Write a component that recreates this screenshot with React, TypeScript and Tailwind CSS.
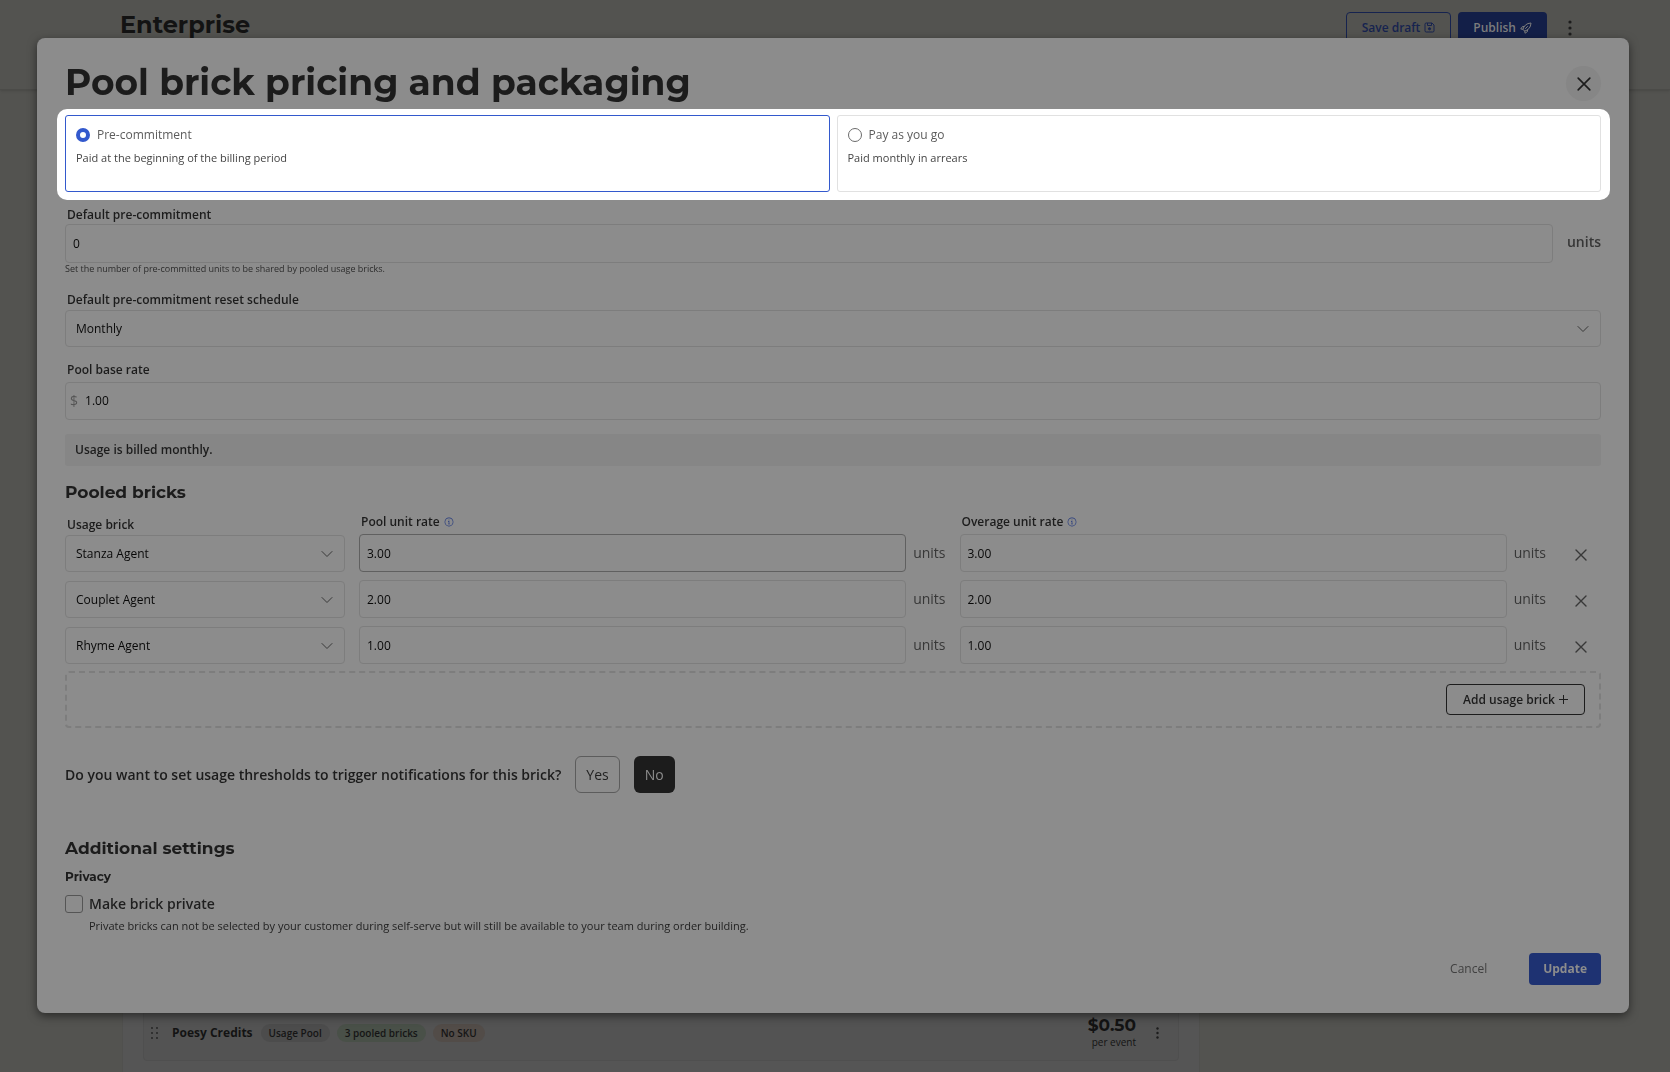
import React, { useState } from "react";
import { RxInfoCircled } from "react-icons/rx";

interface Brick {
  name: string;
  poolRate: string;
  overageRate: string;
}

const bricks: Brick[] = [
  { name: "Stanza Agent", poolRate: "3.00", overageRate: "3.00" },
  { name: "Couplet Agent", poolRate: "2.00", overageRate: "2.00" },
  { name: "Rhyme Agent", poolRate: "1.00", overageRate: "1.00" },
];

const headingFont = "font-[Montserrat,Inter,sans-serif]";
const labelClass = "block pl-0.5 text-xs leading-[18px] font-semibold text-[#1c1c1c]";
const inputClass =
  "w-full rounded-[4px] border border-[#7d7d7d] bg-transparent px-[7px] text-xs text-[#080808] outline-none";

const SaveIcon = () => (
  <svg className="size-[11px]" viewBox="0 0 22 22" fill="none" stroke="currentColor" strokeWidth="2">
    <path d="M2 4.5A2.5 2.5 0 0 1 4.500 2H16l4 4v11.500A2.500 2.500 0 0 1 17.500 20h-13A2.500 2.500 0 0 1 2 17.500z" />
    <path d="M7 2v5h8V2" />
    <circle cx="11" cy="13.500" r="2.200" fill="currentColor" />
  </svg>
);

const RocketIcon = () => (
  <svg
    className="size-3"
    viewBox="0 0 24 24"
    fill="none"
    stroke="currentColor"
    strokeWidth="2"
    strokeLinejoin="round"
    strokeLinecap="round"
  >
    <path d="M6 14C8 7 13 2.500 22 2c-.5 9-5 14-12 16z" />
    <path d="M8.500 9H5l-3.500 5 4.500.500M15 15.500V19l-5 3.500-.5-4.500M11 13l4-4" />
  </svg>
);

const CrossIcon = ({ className }: { className: string }) => (
  <svg
    className={className}
    viewBox="0 0 12 12"
    fill="none"
    stroke="currentColor"
    strokeWidth="1.400"
    strokeLinecap="round"
  >
    <path d="M1 1l10 10M11 1L1 11" />
  </svg>
);

const PlusIcon = () => (
  <svg className="size-[9px]" viewBox="0 0 9 9" fill="none" stroke="currentColor">
    <path d="M4.500 0v9M0 4.500h9" />
  </svg>
);

const DotsIcon = ({ className }: { className: string }) => (
  <svg className={className} viewBox="0 0 4 16" fill="currentColor">
    <circle cx="2" cy="2" r="1.600" />
    <circle cx="2" cy="8" r="1.600" />
    <circle cx="2" cy="14" r="1.600" />
  </svg>
);

const HandleIcon = () => (
  <svg className="h-3 w-[7px] text-[#222222]" viewBox="0 0 7 12" fill="currentColor">
    {[1, 6].map((x) => [1, 6, 11].map((y) => <circle key={`${x}-${y}`} cx={x} cy={y} r="0.900" />))}
  </svg>
);

interface SelectProps {
  id: string;
  options: string[];
  value: string;
  label?: string;
}

const Select: React.FC<SelectProps> = ({ id, options, value, label }) => (
  <div className="relative">
    <select
      id={id}
      aria-label={label}
      defaultValue={value}
      className="block h-[37px] w-full appearance-none rounded-[4px] border border-[#7d7d7d] bg-transparent px-2.5 text-xs text-[#080808] outline-none"
    >
      {options.map((option) => (
        <option key={option}>{option}</option>
      ))}
    </select>
    <svg
      className="pointer-events-none absolute top-[15px] right-3 h-2 w-3 text-[#383838]"
      viewBox="0 0 12 8"
      fill="none"
      stroke="currentColor"
      strokeLinecap="round"
      strokeLinejoin="round"
    >
      <path d="M1 1.500l5 5 5-5" />
    </svg>
  </div>
);

interface PlanCardProps {
  title: string;
  description: string;
  checked: boolean;
  onSelect: () => void;
}

const PlanCard: React.FC<PlanCardProps> = ({ title, description, checked, onSelect }) => (
  <label
    className={`block h-[77px] flex-1 rounded-[3px] border px-2.5 pt-[9px] ${
      checked ? "border-[#3359cd]" : "border-[#e1e1e1]"
    }`}
  >
    <span className="flex items-center gap-[7px] text-xs leading-5 text-[#5c5c5c]">
      <input
        type="radio"
        name="plan"
        checked={checked}
        onChange={onSelect}
        className="size-3.5 appearance-none rounded-full border border-[#6b6b6b] bg-white checked:border-4 checked:border-[#3359cd]"
      />
      {title}
    </span>
    <span className="mt-1 block text-[11px] leading-[18px] text-[#444444]">{description}</span>
  </label>
);

const BrickRow = ({ brick, first }: { brick: Brick; first: boolean }) => {
  const id = brick.name.split(" ")[0].toLowerCase();
  return (
    <div className="grid grid-cols-[280px_minmax(0,1fr)_minmax(0,1fr)_41px] items-end gap-x-3.5">
      <div>
        {first && (
          <label htmlFor={`${id}-brick`} className={`${labelClass} mb-px`}>
            Usage brick
          </label>
        )}
        <Select
          id={`${id}-brick`}
          label={first ? undefined : "Usage brick"}
          value={brick.name}
          options={bricks.map((b) => b.name)}
        />
      </div>
      <div>
        {first && (
          <label htmlFor={`${id}-pool`} className={`${labelClass} mb-[3px]`}>
            <span className="flex items-center gap-1">
              Pool unit rate <RxInfoCircled className="size-2.5 text-[#24397e]" />
            </span>
          </label>
        )}
        <div className="flex items-center gap-[7px]">
          <input
            id={`${id}-pool`}
            aria-label={first ? undefined : "Pool unit rate"}
            defaultValue={brick.poolRate}
            className={`${inputClass} h-[38px] ${first ? "border-[#606060]" : ""}`}
          />
          <span className="text-sm text-[#373737]">units</span>
        </div>
      </div>
      <div>
        {first && (
          <label htmlFor={`${id}-overage`} className={`${labelClass} mb-[3px]`}>
            <span className="flex items-center gap-1">
              Overage unit rate <RxInfoCircled className="size-2.5 text-[#24397e]" />
            </span>
          </label>
        )}
        <div className="flex items-center gap-[7px]">
          <input
            id={`${id}-overage`}
            aria-label={first ? undefined : "Overage unit rate"}
            defaultValue={brick.overageRate}
            className={`${inputClass} h-[38px]`}
          />
          <span className="text-sm text-[#373737]">units</span>
        </div>
      </div>
      <button type="button" aria-label={`Remove ${brick.name}`} className="flex h-[34px] items-center justify-center">
        <CrossIcon className="size-3 text-[#383838]" />
      </button>
    </div>
  );
};

// Product page that stays visible round the dialog
const PageBehind = () => (
  <div className="flex min-h-screen flex-col bg-[#535350]">
    <header className="flex h-[90px] items-start justify-between border-b border-[#4b4b48] pr-[98px] pl-[120px] shadow-sm">
      <h1 className={`${headingFont} pt-[9px] text-2xl font-bold text-[#131313]`}>Enterprise</h1>
      <div className="flex items-center pt-3 text-xs">
        <button
          type="button"
          className="flex h-[31px] items-center gap-1 rounded-[4px] border border-[#16234f] px-[15px] font-semibold text-[#16234f]"
        >
          Save draft <SaveIcon />
        </button>
        <button
          type="button"
          className="ml-[7px] flex h-[31px] items-center gap-1 rounded-[4px] bg-[#131f48] px-[15px] font-semibold text-[#7c7c7c]"
        >
          Publish <RocketIcon />
        </button>
        <button type="button" aria-label="More actions" className="ml-[21px] text-[#1c1c1c]">
          <DotsIcon className="h-4 w-1" />
        </button>
      </div>
    </header>
    <main className="mr-[470px] ml-[122px] flex flex-1 flex-col justify-end border-x border-[#50504e] bg-[#555555] px-5 pb-[11px]">
      <div className="flex h-14 items-center rounded-b-[4px] border border-[#4f4f4f] bg-[#535353] pr-[19px] pl-[7px]">
        <HandleIcon />
        <span className="ml-3.5 text-xs font-bold text-[#131313]">Poesy Credits</span>
        <div className="flex gap-[7px] pl-2 text-[10px] leading-[18px] font-semibold text-[#151515]">
          <span className="rounded-full bg-[#4c4c4c] px-2">Usage Pool</span>
          <span className="rounded-full bg-[#495048] px-2">3 pooled bricks</span>
          <span className="rounded-full bg-[#524c48] px-2">No SKU</span>
        </div>
        <div className="ml-auto text-right text-[#131313]">
          <div className={`${headingFont} text-[17px] leading-[18px] font-bold`}>$0.50</div>
          <div className="text-[10px] leading-4">per event</div>
        </div>
        <button type="button" aria-label="Brick actions" className="ml-5 text-[#1c1c1c]">
          <DotsIcon className="h-3 w-[3px]" />
        </button>
      </div>
    </main>
  </div>
);

const App: React.FC = () => {
  const [plan, setPlan] = useState("pre");

  return (
    <div className="font-['Open_Sans',sans-serif]">
      <PageBehind />
      <div className="fixed inset-0 overflow-hidden pt-[38px] pr-[41px] pl-[37px]">
        <div
          role="dialog"
          aria-labelledby="dialog-title"
          className="rounded-lg bg-[#8c8c8c] px-7 py-7 shadow-[0_3px_10px_rgba(0,0,0,0.5)]"
        >
          <div className="flex h-[35px] items-start justify-between">
            <h2 id="dialog-title" className={`${headingFont} text-4xl leading-8 font-bold text-[#1c1c1c]`}>
              Pool brick pricing and packaging
            </h2>
            <button
              type="button"
              aria-label="Close"
              className="flex size-[35px] items-center justify-center rounded-full bg-[#868686] text-[#1c1c1c]"
            >
              <CrossIcon className="size-3.5" />
            </button>
          </div>

          <div className="mt-2 -mr-[9px] -ml-2 flex gap-[7px] rounded-[10px] bg-white pt-1.5 pr-[9px] pb-2 pl-2">
            <PlanCard
              title="Pre-commitment"
              description="Paid at the beginning of the billing period"
              checked={plan === "pre"}
              onSelect={() => setPlan("pre")}
            />
            <PlanCard
              title="Pay as you go"
              description="Paid monthly in arrears"
              checked={plan === "payg"}
              onSelect={() => setPlan("payg")}
            />
          </div>

          <label htmlFor="commitment" className={`${labelClass} mt-1.5`}>
            Default pre-commitment
          </label>
          <div className="flex items-center gap-3.5">
            <input id="commitment" defaultValue="0" className={`${inputClass} h-[39px]`} />
            <span className="pb-1 text-sm font-semibold text-[#373737]">units</span>
          </div>
          <p className="text-[9px] leading-3 text-[#2c2c2c]">
            Set the number of pre-committed units to be shared by pooled usage bricks.
          </p>

          <label htmlFor="schedule" className={`${labelClass} mt-4 mb-px`}>
            Default pre-commitment reset schedule
          </label>
          <Select id="schedule" value="Monthly" options={["Monthly", "Yearly"]} />

          <label htmlFor="base-rate" className={`${labelClass} mt-3.5 mb-[3px]`}>
            Pool base rate
          </label>
          <div className="flex h-[38px] items-center gap-[7px] rounded-[4px] border border-[#7d7d7d] pl-1">
            <span className="text-sm text-[#555555]">$</span>
            <input
              id="base-rate"
              defaultValue="1.00"
              className="w-full bg-transparent text-xs text-[#080808] outline-none"
            />
          </div>

          <p className="mt-3.5 rounded-[3px] bg-[#868686] px-2.5 text-xs leading-8 font-semibold text-[#1c1c1c]">
            Usage is billed monthly.
          </p>

          <h3 className={`${headingFont} mt-3.5 text-[17px] leading-6 font-bold text-[#1c1c1c]`}>Pooled bricks</h3>
          <div className="mt-[9px] flex flex-col gap-2">
            {bricks.map((brick, i) => (
              <BrickRow key={brick.name} brick={brick} first={i === 0} />
            ))}
          </div>
          <div className="mt-[7px] flex h-[57px] items-center justify-end rounded-[4px] border-2 border-dashed border-[#7d7d7d] pr-3.5">
            <button
              type="button"
              className="flex h-[31px] items-center gap-1 rounded-[4px] border border-[#1c1c1c] px-4 text-xs font-semibold text-[#1c1c1c]"
            >
              Add usage brick <PlusIcon />
            </button>
          </div>

          <div className="mt-7 flex items-center gap-3.5 text-sm">
            <span className="font-semibold text-[#1c1c1c]">
              Do you want to set usage thresholds to trigger notifications for this brick?
            </span>
            <button type="button" className="h-[37px] rounded-md border border-[#5c5c5c] px-2.5 text-[#1f1f1f]">
              Yes
            </button>
            <button type="button" className="h-[37px] rounded-md bg-[#1c1c1c] px-[11px] text-[#8c8c8c]">
              No
            </button>
          </div>

          <h3 className={`${headingFont} mt-[43px] text-[17px] leading-6 font-bold text-[#1c1c1c]`}>
            Additional settings
          </h3>
          <h4 className={`${headingFont} mt-2 text-xs leading-[18px] font-bold text-[#1c1c1c]`}>Privacy</h4>
          <label className="mt-2 flex items-center gap-1.5 text-sm leading-5 font-semibold text-[#1f1f1f]">
            <input type="checkbox" className="size-[18px] appearance-none rounded-[3px] border border-[#555555]" />
            Make brick private
          </label>
          <p className="mt-1 pl-6 text-[11px] leading-4 text-[#1f1f1f]">
            Private bricks can not be selected by your customer during self-serve but will still be available to your
            team during order building.
          </p>

          <div className="mt-[19px] flex items-center justify-end text-xs">
            <button type="button" className="h-8 px-[42px] font-medium text-[#404040]">
              Cancel
            </button>
            <button type="button" className="h-8 rounded-[4px] bg-[#1e3272] px-3.5 font-bold text-[#8c8c8c]">
              Update
            </button>
          </div>
        </div>
      </div>
    </div>
  );
};

export default App;
